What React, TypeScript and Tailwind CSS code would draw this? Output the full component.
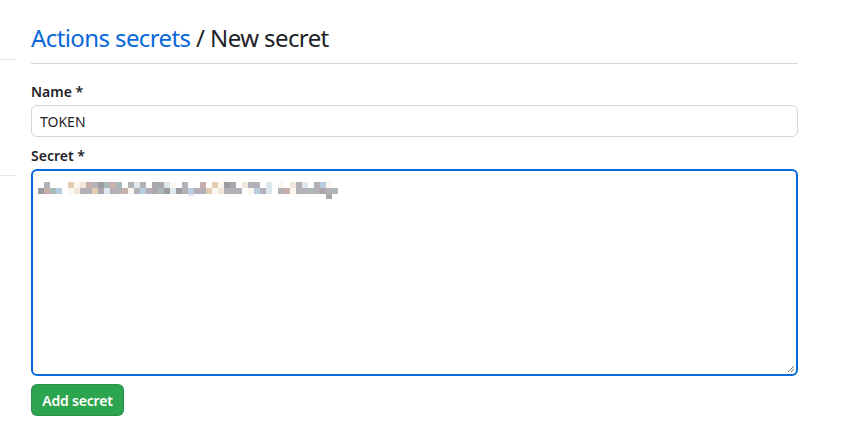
import React from "react"

const font = { fontFamily: '"Noto Sans", "Open Sans", Arial, sans-serif' }

// blurred secret value, drawn as 5px blocks
const palette: Record<string, string> = {
  g: "#b4b0b8",
  t: "#e2ccb2",
  l: "#efe6dc",
  w: "#fbf6ee",
  p: "#c6aeaa",
  s: "#a9b9b8",
  r: "#cbb3ad",
  b: "#b8cce0",
  d: "#9b9ca2",
  c: "#dde8ee",
  m: "#aaa6ae",
}

const row1 = ".g...twlpgdsrs.gcg.mmcw.g..p.twdm.lgg.c.w.lgc.gbw..."
const row2 = "dpsb.wlggtmcggrwgbgmsdcdgbggtwlggg.wbgc.gpwggsgmgs.."

function PixelBlur() {
  return (
    <svg width="320" height="18" viewBox="0 0 320 18">
      {[row1, row2].map((row, y) =>
        row.split("").map((ch, x) =>
          ch === "." ? null : (
            <rect key={`${y}-${x}`} x={x * 6} y={y * 6 + 1} width="6" height="6" fill={palette[ch]} />
          )
        )
      )}
      <rect x="150" y="13" width="6" height="2" fill="#e6e0ea" />
      <rect x="288" y="13" width="6" height="5" fill="#aaaaaa" />
    </svg>
  )
}

export default function App() {
  return (
    <div className="min-h-screen bg-white text-[#1f2328] flex" style={font}>
      {/* sidebar stub */}
      <div className="w-[15px] shrink-0">
        <div className="mt-[59px] border-t border-[#e6e6e6]" />
        <div className="mt-[115px] border-t border-[#e6e6e6]" />
      </div>

      <div className="ml-[16px] w-[767px] pt-[20px]">
        <h2 className="text-[24px] leading-[36px] font-normal tracking-[-0.6px] pb-[7px] border-b border-[#d0d7de]">
          <span className="text-[#0969da]">Actions secrets</span> / New secret
        </h2>

        <form className="mt-[17px]" onSubmit={(e) => e.preventDefault()}>
          <label className="block text-[14px] leading-[21px] font-semibold mb-[3px]">Name *</label>
          <div className="h-[32px] border border-[#d0d7de] rounded-[6px] px-[8px] flex items-center text-[14px]">
            TOKEN
          </div>

          <label className="block text-[14px] leading-[21px] font-semibold mt-[8px] mb-[3px]">Secret *</label>
          <div className="relative h-[207px] border-2 border-[#0969da] rounded-[6px] pl-[5px] pt-[10px]">
            <PixelBlur />
            <svg className="absolute right-[1px] bottom-[1px]" width="9" height="9" viewBox="0 0 9 9">
              <path d="M8 2 L2 8 M8 5 L5 8" stroke="#777" strokeWidth="1" />
            </svg>
          </div>

          <button
            type="submit"
            className="mt-[8px] h-[32px] w-[93px] rounded-[6px] bg-[#2da44e] border border-[rgba(27,31,36,0.15)] text-white text-[14px] font-semibold tracking-[-0.2px]"
          >
            Add secret
          </button>
        </form>
      </div>
    </div>
  )
}
